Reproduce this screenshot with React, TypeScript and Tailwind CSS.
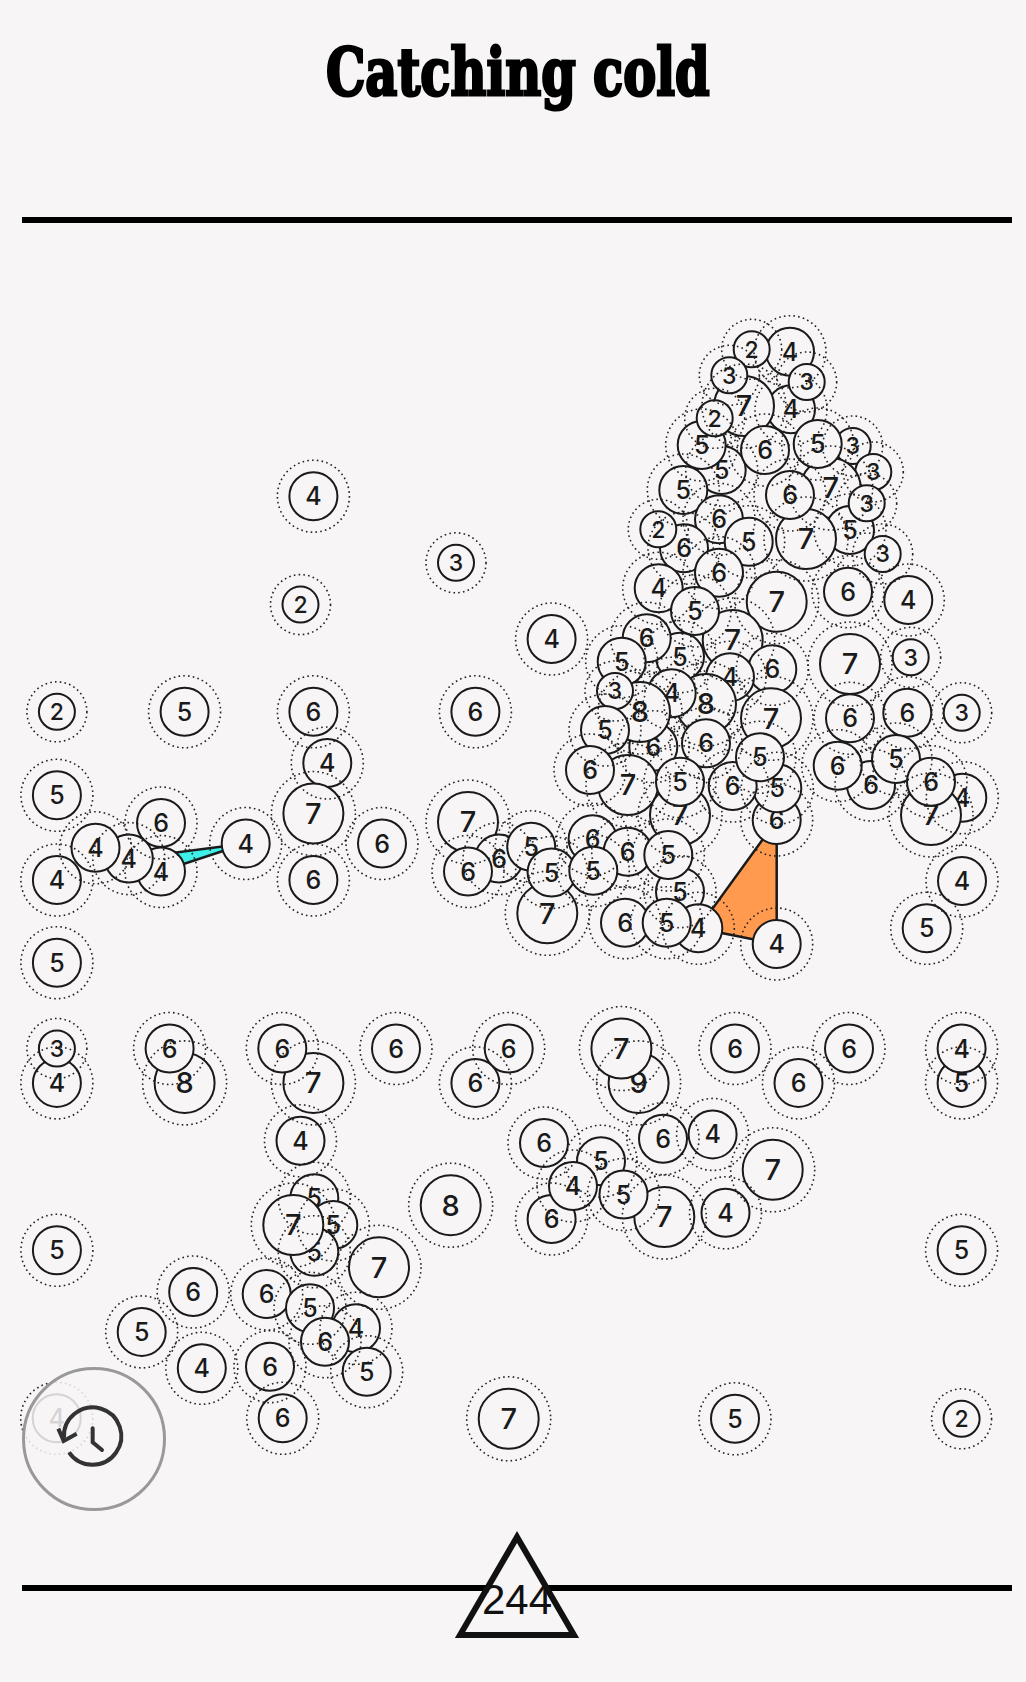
import * as React from "react"

const NODES: [number, number, number][] = [
  // free standing
  [313.4, 496.2, 4], [456, 562.8, 3], [300.5, 604.6, 2], [551.6, 639, 4],
  [56.9, 711.8, 2], [184.6, 711.8, 5], [313.4, 711.8, 6], [475.4, 711.8, 6],
  [327.3, 763, 4], [313.4, 813.5, 7], [56.9, 795.3, 5], [382, 843.5, 6],
  [313.4, 880, 6], [56.9, 880, 4], [56.9, 962.7, 5],
  [161, 823, 6], [245.7, 843.5, 4], [161, 871.5, 4], [128.8, 858.6, 4], [95.5, 847.8, 4],
  // middle run
  [468, 822, 7], [499, 858.6, 6], [468, 871.5, 6], [531.2, 846.8, 5], [547.3, 913.3, 7],
  [551.6, 872.5, 5], [592.6, 839.3, 6], [627.7, 851.7, 6], [593.3, 870.7, 5],
  // top of the big cluster
  [790, 351.7, 4], [751.7, 349.3, 2], [791, 409.3, 4], [806.7, 382, 3], [744, 406, 7],
  [729.3, 375.3, 3], [721.7, 470, 5], [765, 450, 6], [701.7, 445, 5], [714.7, 418.3, 2],
  [852.7, 446, 3], [873.3, 472, 3], [830.7, 488, 7], [817.7, 444, 5], [850, 530, 5],
  [806, 539, 7], [790, 495, 6], [866.7, 503.3, 3], [882.7, 554, 3], [683.3, 490, 5],
  [719, 519.3, 6], [684, 548.3, 6], [658.3, 529.3, 2], [748.7, 541.7, 5], [719, 572.7, 6],
  [848, 591.7, 6], [908.3, 600, 4], [658.7, 588.3, 4], [776.7, 601.7, 7],
  // lower half of the big cluster
  [732.7, 640, 7], [695, 611, 5], [680, 656.7, 5], [646.7, 638.3, 6], [621.7, 661.7, 5],
  [772.3, 669.3, 6], [730, 677.3, 4], [653.3, 746.7, 6], [706, 704, 8], [671.7, 693.3, 4], [640, 712, 8],
  [615, 691, 3], [605, 730, 5], [771, 718.3, 7], [706, 743.3, 6],
  [776.7, 820, 6], [777.3, 788.3, 5], [732.7, 786, 6], [760, 757.3, 5], [628, 785, 7],
  [590, 770, 6], [680, 815, 7], [680, 781.7, 5], [680, 891.7, 5], [668.3, 855, 5],
  [698.3, 928.3, 4], [625, 922.7, 6], [666.7, 922.7, 5], [776.7, 944, 4],
  // right arm
  [850, 664, 7], [910.7, 657.3, 3], [850, 718.3, 6], [907.3, 712.7, 6], [961.7, 712.7, 3],
  [871, 785, 6], [837.7, 765.7, 6], [896, 759, 5], [962.3, 797.7, 4], [931, 815, 7],
  [931, 781.7, 6], [962, 881, 4], [926.7, 928.3, 5],
  // lower rows
  [56.9, 1082.9, 4], [56.9, 1048.5, 3], [184.6, 1082.9, 8], [169.6, 1048.5, 6],
  [313.4, 1082.9, 7], [282.3, 1048.5, 6], [396, 1048.5, 6], [508.7, 1048.5, 6],
  [475.4, 1082.9, 6], [638.6, 1082.9, 9], [621.4, 1048.5, 7], [735, 1048.5, 6],
  [798.5, 1082.9, 6], [849, 1048.5, 6], [961.6, 1082.9, 5], [961.6, 1048.5, 4],
  [300.5, 1140.8, 4], [544, 1143, 6], [712.6, 1134.4, 4], [663, 1138.7, 6],
  [772.7, 1169.8, 7], [601, 1161.2, 5], [551.6, 1219, 6], [664.3, 1217, 7],
  [623.5, 1194.5, 5], [573, 1186, 4], [725.5, 1212.8, 4], [450.7, 1205.2, 8],
  [56.9, 1250.3, 5], [961.6, 1250.3, 5],
  [314.3, 1198.3, 5], [333.3, 1225, 5], [314.3, 1251.7, 5], [293.3, 1225, 7],
  [379, 1267.3, 7], [193.2, 1292, 6], [266.7, 1294, 6], [310, 1308.3, 5], [356, 1328.3, 4],
  [366.7, 1371.7, 5], [325, 1341.7, 6], [141.7, 1331.9, 5], [201.8, 1368.3, 4],
  [270, 1366.7, 6], [282.7, 1418.3, 6], [56.7, 1418.3, 4],
  [508.7, 1418.8, 7], [735, 1418.8, 5], [961.6, 1418.8, 2],
]

const radius = (n: number) => (n <= 3 ? 18 : n <= 6 ? 24 : 30)
const fontSize = (n: number) => (n <= 3 ? 23 : n <= 6 ? 25 : 29)

function Board() {
  return (
    <svg width={1026} height={1362} viewBox="0 223 1026 1362" className="block">
      <polygon
        points="245.7,843.5 128.8,858.6 161,871.5"
        className="fill-[#3df0e8] stroke-[#1a1a1a] stroke-[2.5]"
      />
      <polygon
        points="776.7,820 776.7,944 698.3,928.3"
        className="fill-[#ff9a4f] stroke-[#1a1a1a] stroke-[2.5]"
      />
      {NODES.map(([x, y, n], i) => (
        <g key={i}>
          <circle cx={x} cy={y} r={radius(n)} className="fill-[#f7f5f6] stroke-[#1a1a1a] stroke-2" />
          <text
            x={x}
            y={y + fontSize(n) * 0.36}
            textAnchor="middle"
            fontSize={fontSize(n)}
            className="fill-[#1a1a1a] font-['Inter',sans-serif] font-medium"
          >
            {n}
          </text>
        </g>
      ))}
      {NODES.map(([x, y, n], i) => (
        <circle
          key={i}
          cx={x}
          cy={y}
          r={radius(n) + 12}
          strokeDasharray="1.6 3.2"
          className="fill-none stroke-[#222222] stroke-[1.6]"
        />
      ))}
    </svg>
  )
}

function HistoryButton() {
  return (
    <button className="absolute left-[22px] top-[1367px] flex h-[144px] w-[144px] items-center justify-center rounded-full border-[3px] border-[#999999] bg-[#f7f5f6]/85">
      <svg width={80} height={80} viewBox="162 55 240 240" fill="none" className="stroke-[#333333] stroke-[12]">
        <path d="M207 215A86 86 0 1 0 192 172" />
        <path d="M175 144L191 181L230 159" />
        <path d="M278 143V185L306 208" strokeLinecap="round" />
      </svg>
    </button>
  )
}

function Counter() {
  return (
    <div className="absolute left-[455px] top-[1531px] flex h-[108px] w-[124px] justify-center pt-[45px]">
      <svg width={124} height={108} viewBox="0 0 124 108" className="absolute inset-0">
        <polygon points="62,6 5,104 119,104" className="fill-[#f7f5f6] stroke-[#111111] stroke-[6]" />
      </svg>
      <span className="relative font-['Liberation_Sans',sans-serif] text-[42px] leading-[48px] text-[#111111]">
        244
      </span>
    </div>
  )
}

export default function App() {
  return (
    <div className="relative h-[1682px] w-[1026px] overflow-hidden bg-[#f7f5f6]">
      <header className="flex h-[217px] justify-center pl-[9px]">
        <h1 className="mt-[28px] h-[88px] scale-x-[0.75] whitespace-nowrap font-['DejaVu_Serif',serif] text-[66px] font-bold leading-[88px] text-black [-webkit-text-stroke:3px_black]">
          Catching cold
        </h1>
      </header>
      <div className="mx-[22px] h-[6px] w-[990px] bg-black" />
      <Board />
      <div className="mx-[22px] h-[6px] w-[990px] bg-black" />
      <HistoryButton />
      <Counter />
    </div>
  )
}
